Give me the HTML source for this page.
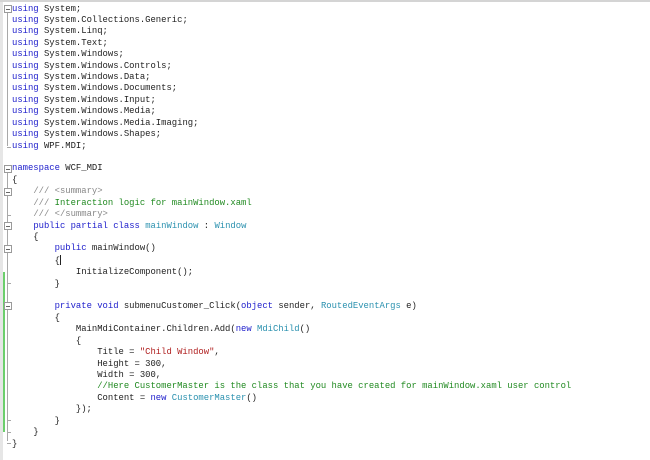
<!DOCTYPE html>
<html><head><meta charset="utf-8"><style>
html,body{margin:0;padding:0;background:#fff;width:650px;height:460px;overflow:hidden;position:relative}
.top{position:absolute;left:0;top:0;width:650px;height:2px;background:#d4d4d4}
.gut{position:absolute;left:0;top:2px;width:3px;height:458px;background:#e6e6e6}
.green{position:absolute;left:3px;top:272px;width:2px;height:160px;background:#6ccf6c}
.vl{position:absolute;left:7px;width:1px;background:#a8a8a8}
.box{position:absolute;left:4px;width:6px;height:6px;border:1px solid #9a9a9a;background:#fff}
.box:after{content:"";position:absolute;left:1px;top:2.5px;width:4px;height:1px;background:#666}
.tk{position:absolute;left:7px;width:4px;height:1px;background:#a8a8a8}
pre{position:absolute;left:12px;top:3.5px;margin:0;font-family:"Liberation Mono",monospace;font-size:8.9px;line-height:11.42px;color:#222}
.k{color:#2020cc}.t{color:#2b91af}.c{color:#218a21}.g{color:#888}.s{color:#b02020}
.cur{display:inline-block;width:1px;height:10px;background:#222;vertical-align:-2px}
</style></head><body>
<div class="top"></div><div class="gut"></div><div class="green"></div>
<div class="vl" style="top:12px;height:134px"></div>
<div class="vl" style="top:171px;height:270px"></div>
<div class="box" style="top:5px"></div>
<div class="box" style="top:165px"></div>
<div class="box" style="top:188px"></div>
<div class="box" style="top:222px"></div>
<div class="box" style="top:245px"></div>
<div class="box" style="top:302px"></div>
<div class="tk" style="top:147px"></div>
<div class="tk" style="top:215px"></div>
<div class="tk" style="top:283px"></div>
<div class="tk" style="top:420px"></div>
<div class="tk" style="top:432px"></div>
<div class="tk" style="top:443px"></div>
<pre><span class="k">using</span> System;
<span class="k">using</span> System.Collections.Generic;
<span class="k">using</span> System.Linq;
<span class="k">using</span> System.Text;
<span class="k">using</span> System.Windows;
<span class="k">using</span> System.Windows.Controls;
<span class="k">using</span> System.Windows.Data;
<span class="k">using</span> System.Windows.Documents;
<span class="k">using</span> System.Windows.Input;
<span class="k">using</span> System.Windows.Media;
<span class="k">using</span> System.Windows.Media.Imaging;
<span class="k">using</span> System.Windows.Shapes;
<span class="k">using</span> WPF.MDI;

<span class="k">namespace</span> WCF_MDI
{
    <span class="g">///</span> <span class="g">&lt;summary&gt;</span>
    <span class="g">///</span> <span class="c">Interaction logic for mainWindow.xaml</span>
    <span class="g">///</span> <span class="g">&lt;/summary&gt;</span>
    <span class="k">public</span> <span class="k">partial</span> <span class="k">class</span> <span class="t">mainWindow</span> : <span class="t">Window</span>
    {
        <span class="k">public</span> mainWindow()
        {<span class="cur"></span>
            InitializeComponent();
        }

        <span class="k">private</span> <span class="k">void</span> submenuCustomer_Click(<span class="k">object</span> sender, <span class="t">RoutedEventArgs</span> e)
        {
            MainMdiContainer.Children.Add(<span class="k">new</span> <span class="t">MdiChild</span>()
            {
                Title = <span class="s">"Child Window"</span>,
                Height = 300,
                Width = 300,
                <span class="c">//Here CustomerMaster is the class that you have created for mainWindow.xaml user control</span>
                Content = <span class="k">new</span> <span class="t">CustomerMaster</span>()
            });
        }
    }
}</pre>
</body></html>
